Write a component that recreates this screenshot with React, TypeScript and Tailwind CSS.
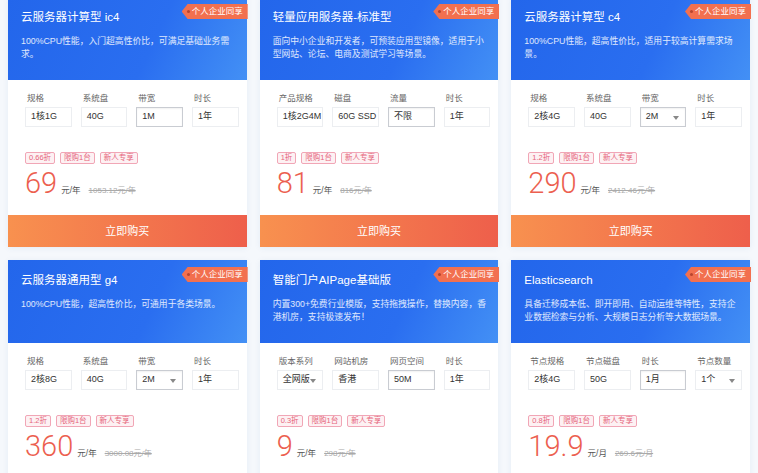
type Spec = { label: string; value: string; dropdown?: boolean };

type Product = {
  title: string;
  desc: string[];
  specs: Spec[];
  discount: string;
  price: string;
  unit: string;
  orig: string;
};

const products: Product[] = [
  {
    title: '云服务器计算型 ic4',
    desc: ['100%CPU性能，入门超高性价比，可满足基础业务需', '求。'],
    specs: [
      { label: '规格', value: '1核1G' },
      { label: '系统盘', value: '40G' },
      { label: '带宽', value: '1M' },
      { label: '时长', value: '1年' },
    ],
    discount: '0.66折',
    price: '69',
    unit: '元/年',
    orig: '1053.12元/年',
  },
  {
    title: '轻量应用服务器-标准型',
    desc: ['面向中小企业和开发者，可预装应用型镜像，适用于小', '型网站、论坛、电商及测试学习等场景。'],
    specs: [
      { label: '产品规格', value: '1核2G4M' },
      { label: '磁盘', value: '60G SSD' },
      { label: '流量', value: '不限' },
      { label: '时长', value: '1年' },
    ],
    discount: '1折',
    price: '81',
    unit: '元/年',
    orig: '816元/年',
  },
  {
    title: '云服务器计算型 c4',
    desc: ['100%CPU性能，超高性价比，适用于较高计算需求场', '景。'],
    specs: [
      { label: '规格', value: '2核4G' },
      { label: '系统盘', value: '40G' },
      { label: '带宽', value: '2M', dropdown: true },
      { label: '时长', value: '1年' },
    ],
    discount: '1.2折',
    price: '290',
    unit: '元/年',
    orig: '2412.46元/年',
  },
  {
    title: '云服务器通用型 g4',
    desc: ['100%CPU性能，超高性价比，可通用于各类场景。'],
    specs: [
      { label: '规格', value: '2核8G' },
      { label: '系统盘', value: '40G' },
      { label: '带宽', value: '2M', dropdown: true },
      { label: '时长', value: '1年' },
    ],
    discount: '1.2折',
    price: '360',
    unit: '元/年',
    orig: '3000.08元/年',
  },
  {
    title: '智能门户AIPage基础版',
    desc: ['内置300+免费行业模版，支持拖拽操作，替换内容，香', '港机房，支持极速发布！'],
    specs: [
      { label: '版本系列', value: '全网版', dropdown: true },
      { label: '网站机房', value: '香港' },
      { label: '网页空间', value: '50M' },
      { label: '时长', value: '1年' },
    ],
    discount: '0.3折',
    price: '9',
    unit: '元/年',
    orig: '298元/年',
  },
  {
    title: 'Elasticsearch',
    desc: ['具备迁移成本低、即开即用、自动运维等特性，支持企', '业数据检索与分析、大规模日志分析等大数据场景。'],
    specs: [
      { label: '节点规格', value: '2核4G' },
      { label: '节点磁盘', value: '50G' },
      { label: '时长', value: '1月' },
      { label: '节点数量', value: '1个', dropdown: true },
    ],
    discount: '0.8折',
    price: '19.9',
    unit: '元/月',
    orig: '269.6元/月',
  },
];

function Ribbon() {
  return (
    <div className="absolute right-[-1px] top-[7px] flex h-[15px] items-center bg-[#f2704f] pl-[10px] pr-[5px] text-[8.5px] leading-none text-white [clip-path:polygon(6px_0,100%_0,100%_100%,6px_100%,0_50%)]">
      <span className="absolute left-[5px] top-[6px] h-[3px] w-[3px] rounded-full bg-[#b8452f]" />
      个人企业同享
    </div>
  );
}

function SpecBox({ spec, index }: { spec: Spec; index: number }) {
  const border = index === 2 ? 'border-[#c9ccd2] shadow-[inset_0_1px_2px_rgba(0,0,0,0.06)]' : 'border-[#eceef1]';
  return (
    <div className={`relative flex h-[20px] items-center border ${border} bg-white pl-[5px] text-[9px] text-[#333]`}>
      {spec.value}
      {spec.dropdown && (
        <span className="absolute right-[6px] top-[8px] h-0 w-0 border-x-[3px] border-t-[4px] border-x-transparent border-t-[#888]" />
      )}
    </div>
  );
}

function Card({ p }: { p: Product }) {
  return (
    <div className="relative flex flex-col bg-white shadow-[0_1px_6px_rgba(40,90,170,0.08)]">
      <div className="relative h-[83px] bg-[linear-gradient(115deg,#2366eb_0%,#2a6ef0_60%,#4390f5_100%)] px-[13px] pt-[12px]">
        <Ribbon />
        <div className="text-[11.5px] leading-[16px] text-white">{p.title}</div>
        <div className="mt-[10px] text-[8.8px] leading-[13px] text-white/85">
          {p.desc.map((line) => (
            <div key={line} className="whitespace-nowrap">{line}</div>
          ))}
        </div>
      </div>

      <div className="pl-[17px] pr-[8px] pt-[12px]">
        <div className="grid grid-cols-4 gap-x-[9px]">
          {p.specs.map((s) => (
            <div key={s.label} className="h-[12px] pl-[2px] text-[8.5px] leading-[12px] text-[#666]">
              {s.label}
            </div>
          ))}
        </div>
        <div className="mt-[3px] grid grid-cols-4 gap-x-[9px]">
          {p.specs.map((s, i) => (
            <SpecBox key={s.label} spec={s} index={i} />
          ))}
        </div>

        <div className="mt-[25px] flex h-[12px] gap-[5px]">
          {[p.discount, '限购1台', '新人专享'].map((t) => (
            <span
              key={t}
              className="flex items-center rounded-[2px] border border-[#f1a6b6] bg-[#fdf1f3] px-[3px] text-[7.5px] leading-none text-[#e5657b]"
            >
              {t}
            </span>
          ))}
        </div>

        <div className="mt-[2px] flex h-[34px] items-baseline">
          <span className="font-['Roboto',sans-serif] text-[29px] font-light leading-[34px] text-[#ec5f50]">{p.price}</span>
          <span className="ml-[4px] text-[8.5px] text-[#555]">{p.unit}</span>
          <span className="ml-[8px] text-[8px] text-[#aaa] line-through">{p.orig}</span>
        </div>
      </div>

      <button className="mt-[15px] h-[32px] w-full bg-[linear-gradient(90deg,#f8914f,#ee5f4b)] text-[11px] text-white">
        立即购买
      </button>
    </div>
  );
}

export default function App() {
  return (
    <div className="h-[473px] overflow-hidden bg-[#f5f8fc] font-['Liberation_Sans','Noto_Sans_CJK_SC',sans-serif]">
      <div className="-mt-[3px] grid grid-cols-3 gap-x-[13px] gap-y-[13px] px-[8px]">
        {products.map((p) => (
          <Card key={p.title} p={p} />
        ))}
      </div>
    </div>
  );
}
